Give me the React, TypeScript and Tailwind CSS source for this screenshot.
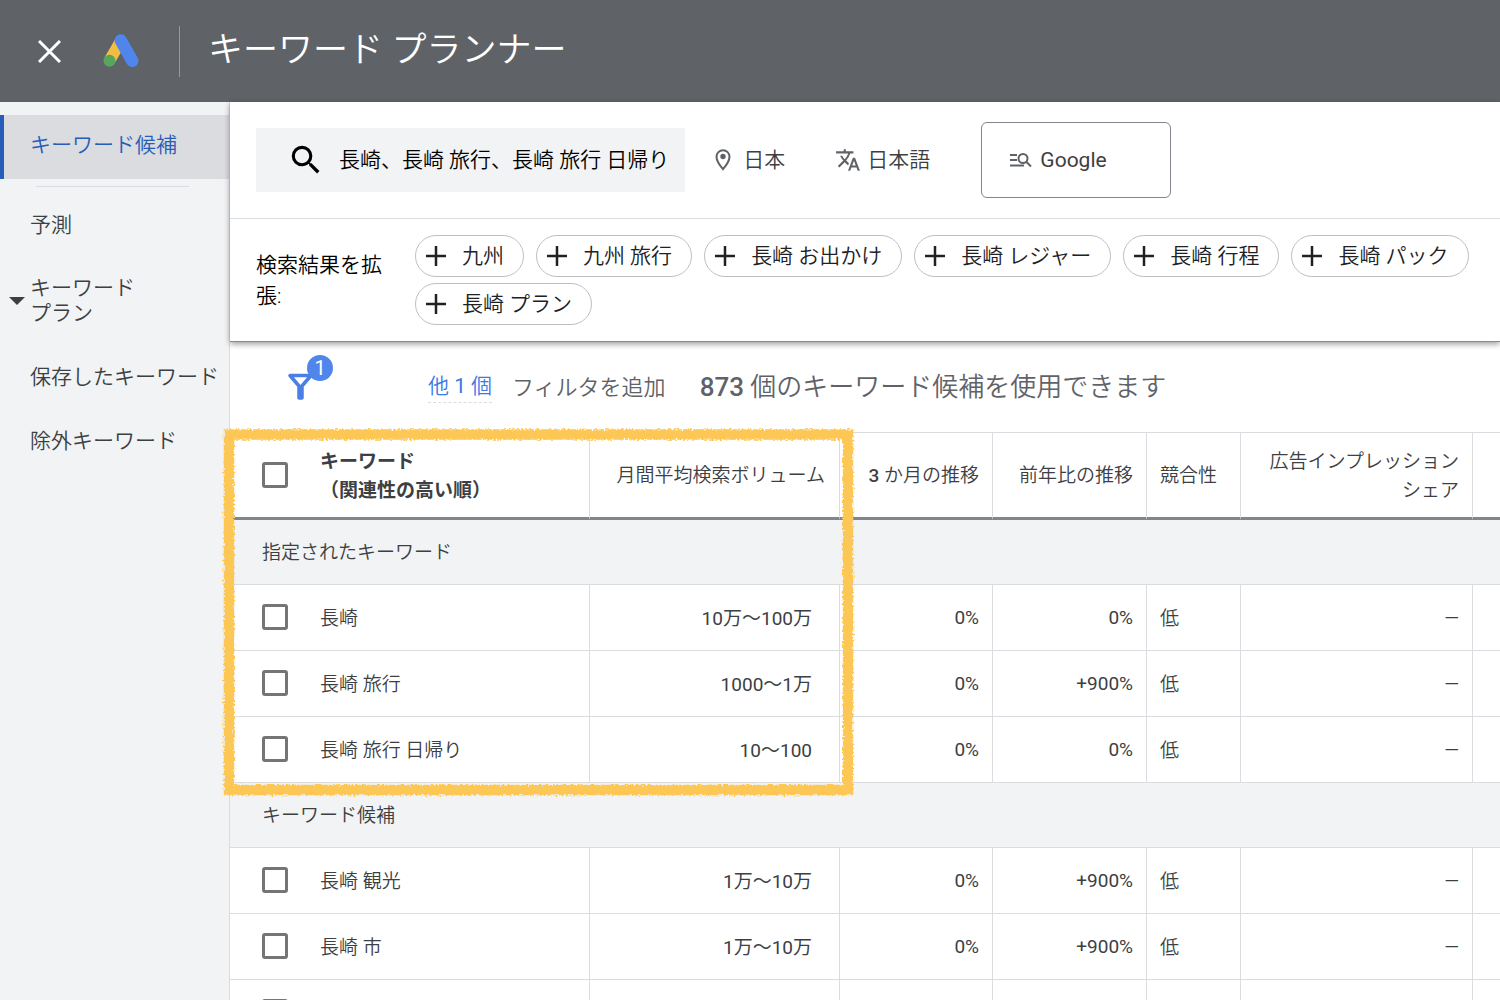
import React, { useState } from "react";
import { MdSearch, MdTranslate } from "react-icons/md";

interface KeywordRow {
  keyword: string;
  volume: string;
  threeMonth: string;
  yearly: string;
  competition: string;
  share: string;
}

interface KeywordGroup {
  title: string;
  rows: KeywordRow[];
}

const makeRow = (keyword: string, volume: string, yearly: string): KeywordRow => ({
  keyword,
  volume,
  threeMonth: "0%",
  yearly,
  competition: "低",
  share: "—",
});

const groups: KeywordGroup[] = [
  {
    title: "指定されたキーワード",
    rows: [
      makeRow("長崎", "10万〜100万", "0%"),
      makeRow("長崎 旅行", "1000〜1万", "+900%"),
      makeRow("長崎 旅行 日帰り", "10〜100", "0%"),
    ],
  },
  {
    title: "キーワード候補",
    rows: [
      makeRow("長崎 観光", "1万〜10万", "+900%"),
      makeRow("長崎 市", "1万〜10万", "+900%"),
      makeRow("", "", ""),
    ],
  },
];

const suggestions = [
  "九州",
  "九州 旅行",
  "長崎 お出かけ",
  "長崎 レジャー",
  "長崎 行程",
  "長崎 パック",
  "長崎 プラン",
];

const AdsLogo: React.FC = () => (
  <svg width="36" height="34" viewBox="0 0 36 34" aria-hidden="true">
    <path d="M6.5 26.5 17.5 7.5" stroke="#f2bd42" strokeWidth="11.5" />
    <path d="M17.8 6.5 29.2 26.8" stroke="#5086ec" strokeWidth="12.4" strokeLinecap="round" />
    <circle cx="6.5" cy="26.8" r="6" fill="#58a55c" />
  </svg>
);

const PinIcon: React.FC = () => (
  <svg width="16" height="22" viewBox="0 0 16 22" fill="none" aria-hidden="true">
    <path
      d="M8 1.2a6.5 6.5 0 0 0-6.5 6.5C1.5 12.5 8 20.2 8 20.2s6.5-7.7 6.5-12.5A6.5 6.5 0 0 0 8 1.2z"
      stroke="#5f6368"
      strokeWidth="2"
    />
    <circle cx="8" cy="7.5" r="2.7" fill="#5f6368" />
  </svg>
);

const SearchNetworkIcon: React.FC = () => (
  <svg width="22" height="16" viewBox="0 0 22 16" fill="none" stroke="#5f6368" strokeWidth="2" aria-hidden="true">
    <path d="M0 3h7M0 8h7M0 13.5h14" />
    <circle cx="13" cy="6.5" r="4.5" />
    <path d="M16 9.5l5 5" />
  </svg>
);

const PlusIcon: React.FC = () => (
  <svg width="20" height="20" viewBox="0 0 20 20" stroke="#202124" strokeWidth="2.5" aria-hidden="true">
    <path d="M10 0v20M0 10h20" />
  </svg>
);

// Hand drawn marker frame around the keyword and volume columns
const MarkerFrame: React.FC = () => (
  <svg
    className="pointer-events-none absolute -left-3 -top-3 z-10"
    width="640"
    height="384"
    viewBox="0 0 640 384"
    fill="none"
    aria-hidden="true"
  >
    <defs>
      <filter id="rough" x="0" y="0" width="640" height="384" filterUnits="userSpaceOnUse">
        <feTurbulence type="fractalNoise" baseFrequency="0.5" numOctaves="2" seed="4" result="noise" />
        <feDisplacementMap in="SourceGraphic" in2="noise" scale="6" xChannelSelector="R" yChannelSelector="G" />
      </filter>
    </defs>
    <rect x="11" y="14.5" width="619" height="355.5" stroke="#fcc755" strokeWidth="10.5" filter="url(#rough)" />
  </svg>
);

const checkboxClass =
  "block size-[26px] shrink-0 appearance-none rounded-[3px] border-3 border-[#757575] bg-white checked:bg-[#1a73e8]";

const App: React.FC = () => {
  const [selected, setSelected] = useState<string[]>([]);

  const toggle = (id: string) => {
    setSelected((prev) =>
      prev.includes(id) ? prev.filter((item) => item !== id) : [...prev, id]
    );
  };

  return (
    <div className="flex h-screen flex-col overflow-hidden bg-white font-['Roboto','Noto_Sans_CJK_JP',sans-serif] font-[350] text-[#3c4043]">
      {/* Header */}
      <header className="flex h-[102px] shrink-0 items-center bg-[#5f6368] text-white">
        <button type="button" aria-label="閉じる" className="ml-[38px]">
          <svg width="23" height="23" viewBox="0 0 23 23" stroke="currentColor" strokeWidth="3" aria-hidden="true">
            <path d="M1 1l21 21M22 1 1 22" />
          </svg>
        </button>
        <div className="ml-[42px]">
          <AdsLogo />
        </div>
        <div className="ml-10 h-[51px] w-px bg-[#96999c]" />
        <h1 className="ml-7 text-[35px] font-[350] leading-[44px]">キーワード プランナー</h1>
      </header>

      <div className="flex min-h-0 flex-1">
        {/* Sidebar */}
        <nav className="w-[230px] shrink-0 border-r border-[#dadce0] bg-[#f1f3f4] pt-[13px] text-[21px] leading-[25px]">
          <a
            href="#ideas"
            className="flex h-16 items-center border-l-4 border-[#285cb9] bg-[#dadce0] pb-1 pl-[26px] text-[#285cb9]"
          >
            キーワード候補
          </a>
          <div className="ml-9 mr-10 mt-[7px] h-px bg-[#dadce0]" />
          <a href="#forecast" className="mt-[6px] flex h-16 items-center pl-[30px]">
            予測
          </a>
          <a href="#plan" className="flex h-[88px] items-center pl-[9px]">
            <svg width="16" height="8" viewBox="0 0 16 8" fill="#3c4043" aria-hidden="true">
              <path d="M0 0h16L8 8z" />
            </svg>
            <span className="ml-[5px]">
              キーワード
              <br />
              プラン
            </span>
          </a>
          <a href="#saved" className="flex h-16 items-center whitespace-nowrap pl-[30px]">
            保存したキーワード
          </a>
          <a href="#negative" className="flex h-16 items-center pl-[30px]">
            除外キーワード
          </a>
        </nav>

        <main className="min-w-0 flex-1">
          {/* Search settings */}
          <section className="relative border-b border-[#8a8a8a] bg-white shadow-[0_2px_6px_rgba(0,0,0,0.4)]">
            <div className="flex h-[117px] items-center border-b border-[#dadce0] pl-[26px] text-[21px]">
              <button type="button" className="flex h-16 items-center bg-[#f1f3f4] pl-[31px] pr-4 text-black">
                <MdSearch size={38} />
                <span className="ml-3.5 whitespace-nowrap pt-0.5">長崎、長崎 旅行、長崎 旅行 日帰り</span>
              </button>
              <button type="button" className="ml-[30px] flex items-center gap-3">
                <PinIcon />
                <span className="pt-0.5">日本</span>
              </button>
              <button type="button" className="ml-[50px] flex items-center gap-[6px]">
                <MdTranslate size={26} color="#5f6368" />
                <span className="pt-0.5">日本語</span>
              </button>
              <button
                type="button"
                className="ml-[51px] flex h-[76px] w-[190px] items-center gap-2 rounded-md border border-[#80868b] pl-7 font-normal"
              >
                <SearchNetworkIcon />
                <span className="pt-0.5">Google</span>
              </button>
            </div>
            <div className="flex min-h-[122px] items-center pl-[26px] text-[21px] text-[#202124]">
              <p className="w-[145px] shrink-0 pr-4 pt-0.5 leading-[31px] text-black">検索結果を拡張:</p>
              <div className="ml-[14px] flex flex-wrap gap-x-3 gap-y-[6px] pr-5">
                {suggestions.map((text) => (
                  <button
                    key={text}
                    type="button"
                    className="flex h-[42px] items-center gap-4 whitespace-nowrap rounded-full border border-[#bdc1c6] pl-[10px] pr-[19px]"
                  >
                    <PlusIcon />
                    <span className="pt-0.5">{text}</span>
                  </button>
                ))}
              </div>
            </div>
          </section>

          {/* Filter bar */}
          <section className="flex h-[90px] items-center pl-[57px] text-[22px] text-[#5f6368]">
            <button type="button" aria-label="フィルタ" className="relative pb-[18px]">
              <svg width="46" height="46" viewBox="0 0 46 46" aria-hidden="true">
                <path
                  d="M3 20.5h21l-9 10.5v12h-3V31z"
                  fill="none"
                  stroke="#4a7fe5"
                  strokeWidth="3.5"
                  strokeLinejoin="round"
                />
              </svg>
              <span className="absolute right-0 top-0 flex size-[26px] items-center justify-center rounded-full bg-[#5086ec] text-[20px] font-normal text-white">
                1
              </span>
            </button>
            <a href="#filters" className="ml-[95px] border-b border-dashed border-[#dadce0] text-[21px] text-[#3b78e7]">
              他 <span className="font-normal">1</span> 個
            </a>
            <button type="button" className="ml-5">
              フィルタを追加
            </button>
            <p className="ml-[34px] whitespace-nowrap text-[26px]">
              <span className="font-medium">873</span> 個のキーワード候補を使用できます
            </p>
          </section>

          {/* Keyword table */}
          <div className="relative">
            <MarkerFrame />
            <table className="w-full table-fixed border-separate border-spacing-0 text-[19px] leading-[29px]">
              <colgroup>
                <col className="w-[360px]" />
                <col className="w-[250px]" />
                <col className="w-[153px]" />
                <col className="w-[154px]" />
                <col className="w-[94px]" />
                <col className="w-[232px]" />
                <col />
              </colgroup>
              <thead>
                <tr className="h-[88px] [&>th]:border-b-3 [&>th]:border-t [&>th]:border-r [&>th]:border-[#dadce0] [&>th]:border-b-[#80868b] [&>th]:font-[350]">
                  <th className="pl-8 text-left">
                    <label className="flex items-center gap-8 font-bold">
                      <input
                        type="checkbox"
                        className={checkboxClass}
                        checked={selected.includes("all")}
                        onChange={() => toggle("all")}
                      />
                      <span className="pt-0.5">
                        キーワード
                        <br />
                        （関連性の高い順）
                      </span>
                    </label>
                  </th>
                  <th className="pr-[14px] text-right">月間平均検索ボリューム</th>
                  <th className="pr-[13px] text-right">
                    <span className="font-medium">3</span> か月の推移
                  </th>
                  <th className="pr-[13px] text-right">前年比の推移</th>
                  <th className="pl-[13px] text-left">競合性</th>
                  <th className="pr-[13px] pt-0.5 text-right">
                    広告インプレッション
                    <br />
                    シェア
                  </th>
                  <th className="!border-r-0" />
                </tr>
              </thead>
              {groups.map((group, g) => (
                <tbody key={group.title}>
                  <tr className="h-[65px]">
                    <th
                      colSpan={7}
                      scope="colgroup"
                      className="border-b border-[#dadce0] bg-[#f1f3f4] pl-8 text-left font-[350]"
                    >
                      {group.title}
                    </th>
                  </tr>
                  {group.rows.map((row, r) => {
                    const id = `${g}-${r}`;
                    return (
                      <tr
                        key={id}
                        className="h-[66px] font-normal [&>td]:border-b [&>td]:border-r [&>td]:border-[#dadce0]"
                      >
                        <td className="pb-0.5 pl-8 font-[350]">
                          <label className="flex items-center gap-8">
                            <input
                              type="checkbox"
                              className={checkboxClass}
                              checked={selected.includes(id)}
                              onChange={() => toggle(id)}
                            />
                            <span className="pt-1">{row.keyword}</span>
                          </label>
                        </td>
                        <td className="pr-[27px] pt-0.5 text-right">{row.volume}</td>
                        <td className="pr-[13px] text-right">{row.keyword && row.threeMonth}</td>
                        <td className="pr-[13px] text-right">{row.yearly}</td>
                        <td className="pl-[13px] pt-0.5 font-[350]">{row.keyword && row.competition}</td>
                        <td className="pr-[13px] text-right">{row.keyword && row.share}</td>
                        <td className="!border-r-0" />
                      </tr>
                    );
                  })}
                </tbody>
              ))}
            </table>
          </div>
        </main>
      </div>
    </div>
  );
};

export default App;
